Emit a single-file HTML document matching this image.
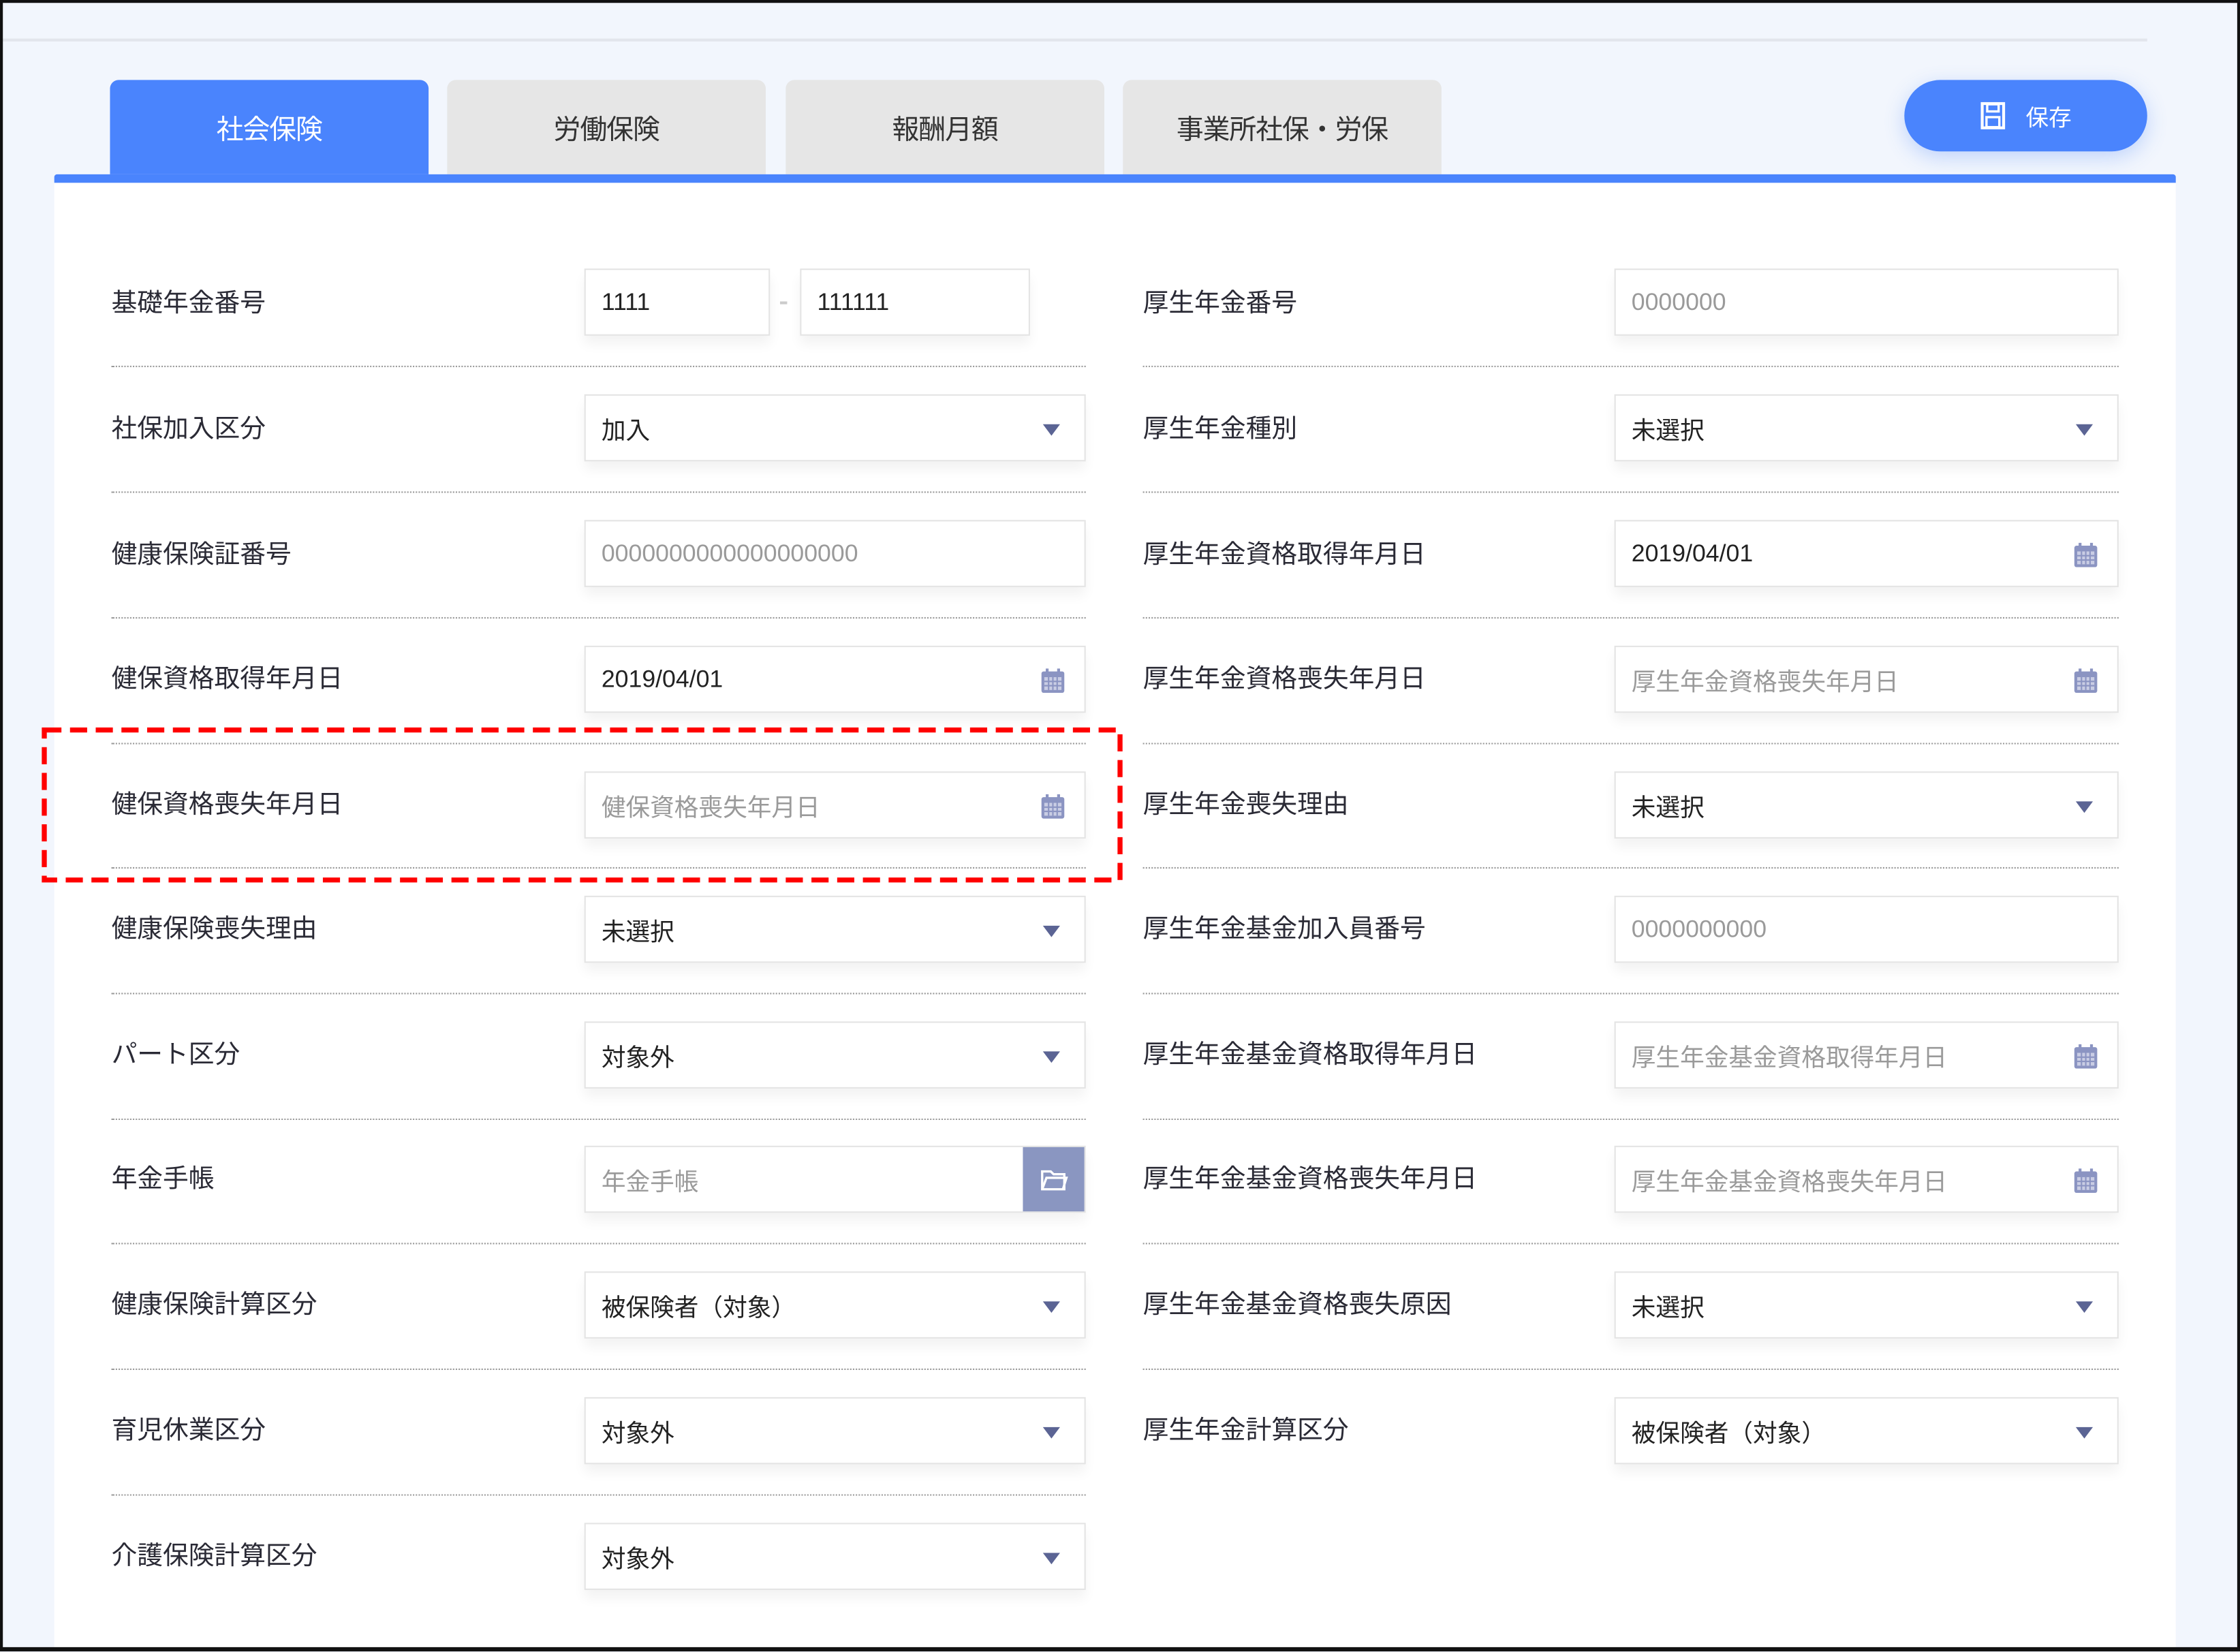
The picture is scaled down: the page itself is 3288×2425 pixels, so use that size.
<!DOCTYPE html>
<html><head><meta charset="utf-8">
<style>
html,body{margin:0;padding:0;}
body{width:3288px;height:2425px;overflow:hidden;background:#f2f6fd;font-family:"Liberation Sans","Noto Sans CJK JP",sans-serif;}
#w{position:absolute;left:0;top:0;width:1568px;height:1156px;transform:scale(2.097);transform-origin:0 0;background:#f2f6fd;}
.a{position:absolute;}
.tab{position:absolute;top:56px;height:66px;width:223px;background:#e6e6e6;border-radius:6px 6px 0 0;color:#333;font-size:19px;display:flex;align-items:center;justify-content:center;letter-spacing:-0.5px;}
.tab.on{background:#4a84fd;color:#fff;}
.lbl{position:absolute;font-size:18px;color:#2a2a35;line-height:20px;}
.in{position:absolute;height:47px;background:#fff;border:1px solid #e4e4e4;box-sizing:border-box;box-shadow:0 6px 8px rgba(0,0,0,0.05);font-size:17px;color:#222;padding-left:11px;display:flex;align-items:center;}
.ph{color:#9a9a9a;}
.dot{position:absolute;height:0;border-top:1.5px dotted #999;}
.tri{position:absolute;right:17px;top:20px;width:0;height:0;border-left:6px solid transparent;border-right:6px solid transparent;border-top:8px solid #5b6494;}
.cal{position:absolute;right:13px;top:14px;}
</style></head><body>
<div id="w">
<div class="a" style="left:0;top:27px;width:1503px;height:2px;background:#e2e5ec"></div>
<div class="tab on" style="left:77px">社会保険</div>
<div class="tab" style="left:313px">労働保険</div>
<div class="tab" style="left:550px">報酬月額</div>
<div class="tab" style="left:786px">事業所社保・労保</div>
<div class="a" style="left:1333px;top:56px;width:170px;height:50px;border-radius:25px;background:#4a84fd;box-shadow:0 4px 14px rgba(74,132,253,0.3);color:#fff;font-size:16px;display:flex;align-items:center;justify-content:center;">
<svg width="18" height="20" viewBox="0 0 18 20" style="margin-right:14px"><rect x="1.5" y="1.5" width="15" height="17" fill="none" stroke="#fff" stroke-width="2"/><rect x="5" y="2" width="8" height="5" fill="none" stroke="#fff" stroke-width="1.6"/><rect x="4.5" y="11" width="9" height="7" fill="none" stroke="#fff" stroke-width="1.6"/></svg>保存</div>
<div class="a" style="left:38px;top:122px;width:1485px;height:6px;background:#4a84fd;border-radius:2px 2px 0 0"></div>
<div class="a" style="left:38px;top:128px;width:1485px;height:1025px;background:#fff"></div>

<div class="lbl" style="left:78px;top:202px">基礎年金番号</div>
<div class="in" style="left:409px;top:188px;width:130px">1111</div>
<div class="a" style="left:546px;top:211px;width:5px;height:2px;background:#ccc"></div>
<div class="in" style="left:560px;top:188px;width:161px">111111</div>
<div class="dot" style="left:78px;top:256px;width:682px"></div>

<div class="lbl" style="left:78px;top:290px">社保加入区分</div>
<div class="in" style="left:409px;top:276px;width:351px">加入<div class="tri"></div></div>
<div class="dot" style="left:78px;top:344px;width:682px"></div>

<div class="lbl" style="left:78px;top:378px">健康保険証番号</div>
<div class="in ph" style="left:409px;top:364px;width:351px">0000000000000000000</div>
<div class="dot" style="left:78px;top:432px;width:682px"></div>

<div class="lbl" style="left:78px;top:465px">健保資格取得年月日</div>
<div class="in" style="left:409px;top:452px;width:351px">2019/04/01<svg class="cal" width="18" height="19" viewBox="0 0 18 19"><rect x="1" y="3" width="16" height="15" rx="1.5" fill="#8b94c2"/><rect x="3" y="7" width="12" height="9" fill="#c9cde4"/><path d="M6 7v9M9 7v9M12 7v9M3 10h12M3 13h12" stroke="#8b94c2" stroke-width="1"/><rect x="4" y="1" width="2" height="4" fill="#8b94c2"/><rect x="12" y="1" width="2" height="4" fill="#8b94c2"/></svg></div>
<div class="dot" style="left:78px;top:520px;width:682px"></div>

<div class="lbl" style="left:78px;top:553px">健保資格喪失年月日</div>
<div class="in ph" style="left:409px;top:540px;width:351px">健保資格喪失年月日<svg class="cal" width="18" height="19" viewBox="0 0 18 19"><rect x="1" y="3" width="16" height="15" rx="1.5" fill="#8b94c2"/><rect x="3" y="7" width="12" height="9" fill="#c9cde4"/><path d="M6 7v9M9 7v9M12 7v9M3 10h12M3 13h12" stroke="#8b94c2" stroke-width="1"/><rect x="4" y="1" width="2" height="4" fill="#8b94c2"/><rect x="12" y="1" width="2" height="4" fill="#8b94c2"/></svg></div>
<div class="dot" style="left:78px;top:607px;width:682px"></div>

<div class="lbl" style="left:78px;top:640px">健康保険喪失理由</div>
<div class="in" style="left:409px;top:627px;width:351px">未選択<div class="tri"></div></div>
<div class="dot" style="left:78px;top:695px;width:682px"></div>

<div class="lbl" style="left:78px;top:728px">パート区分</div>
<div class="in" style="left:409px;top:715px;width:351px">対象外<div class="tri"></div></div>
<div class="dot" style="left:78px;top:783px;width:682px"></div>

<div class="lbl" style="left:78px;top:815px">年金手帳</div>
<div class="in ph" style="left:409px;top:802px;width:351px">年金手帳<div class="a" style="right:0;top:0;width:43px;height:45px;background:#8a96c1;display:flex;align-items:center;justify-content:center"><svg width="20" height="16" viewBox="0 0 20 16"><path d="M1.5 2h6l2 2h7.5v10.5h-15.5z" fill="none" stroke="#fff" stroke-width="1.6"/><path d="M1.5 14.5l3-8h14l-2.5 8" fill="none" stroke="#fff" stroke-width="1.6"/></svg></div></div>
<div class="dot" style="left:78px;top:870px;width:682px"></div>

<div class="lbl" style="left:78px;top:903px">健康保険計算区分</div>
<div class="in" style="left:409px;top:890px;width:351px">被保険者（対象）<div class="tri"></div></div>
<div class="dot" style="left:78px;top:958px;width:682px"></div>

<div class="lbl" style="left:78px;top:991px">育児休業区分</div>
<div class="in" style="left:409px;top:978px;width:351px">対象外<div class="tri"></div></div>
<div class="dot" style="left:78px;top:1046px;width:682px"></div>

<div class="lbl" style="left:78px;top:1079px">介護保険計算区分</div>
<div class="in" style="left:409px;top:1066px;width:351px">対象外<div class="tri"></div></div>

<div class="lbl" style="left:800px;top:202px">厚生年金番号</div>
<div class="in ph" style="left:1130px;top:188px;width:353px">0000000</div>
<div class="dot" style="left:800px;top:256px;width:683px"></div>

<div class="lbl" style="left:800px;top:290px">厚生年金種別</div>
<div class="in" style="left:1130px;top:276px;width:353px">未選択<div class="tri"></div></div>
<div class="dot" style="left:800px;top:344px;width:683px"></div>

<div class="lbl" style="left:800px;top:378px">厚生年金資格取得年月日</div>
<div class="in" style="left:1130px;top:364px;width:353px">2019/04/01<svg class="cal" width="18" height="19" viewBox="0 0 18 19"><rect x="1" y="3" width="16" height="15" rx="1.5" fill="#8b94c2"/><rect x="3" y="7" width="12" height="9" fill="#c9cde4"/><path d="M6 7v9M9 7v9M12 7v9M3 10h12M3 13h12" stroke="#8b94c2" stroke-width="1"/><rect x="4" y="1" width="2" height="4" fill="#8b94c2"/><rect x="12" y="1" width="2" height="4" fill="#8b94c2"/></svg></div>
<div class="dot" style="left:800px;top:432px;width:683px"></div>

<div class="lbl" style="left:800px;top:465px">厚生年金資格喪失年月日</div>
<div class="in ph" style="left:1130px;top:452px;width:353px">厚生年金資格喪失年月日<svg class="cal" width="18" height="19" viewBox="0 0 18 19"><rect x="1" y="3" width="16" height="15" rx="1.5" fill="#8b94c2"/><rect x="3" y="7" width="12" height="9" fill="#c9cde4"/><path d="M6 7v9M9 7v9M12 7v9M3 10h12M3 13h12" stroke="#8b94c2" stroke-width="1"/><rect x="4" y="1" width="2" height="4" fill="#8b94c2"/><rect x="12" y="1" width="2" height="4" fill="#8b94c2"/></svg></div>
<div class="dot" style="left:800px;top:520px;width:683px"></div>

<div class="lbl" style="left:800px;top:553px">厚生年金喪失理由</div>
<div class="in" style="left:1130px;top:540px;width:353px">未選択<div class="tri"></div></div>
<div class="dot" style="left:800px;top:607px;width:683px"></div>

<div class="lbl" style="left:800px;top:640px">厚生年金基金加入員番号</div>
<div class="in ph" style="left:1130px;top:627px;width:353px">0000000000</div>
<div class="dot" style="left:800px;top:695px;width:683px"></div>

<div class="lbl" style="left:800px;top:728px">厚生年金基金資格取得年月日</div>
<div class="in ph" style="left:1130px;top:715px;width:353px">厚生年金基金資格取得年月日<svg class="cal" width="18" height="19" viewBox="0 0 18 19"><rect x="1" y="3" width="16" height="15" rx="1.5" fill="#8b94c2"/><rect x="3" y="7" width="12" height="9" fill="#c9cde4"/><path d="M6 7v9M9 7v9M12 7v9M3 10h12M3 13h12" stroke="#8b94c2" stroke-width="1"/><rect x="4" y="1" width="2" height="4" fill="#8b94c2"/><rect x="12" y="1" width="2" height="4" fill="#8b94c2"/></svg></div>
<div class="dot" style="left:800px;top:783px;width:683px"></div>

<div class="lbl" style="left:800px;top:815px">厚生年金基金資格喪失年月日</div>
<div class="in ph" style="left:1130px;top:802px;width:353px">厚生年金基金資格喪失年月日<svg class="cal" width="18" height="19" viewBox="0 0 18 19"><rect x="1" y="3" width="16" height="15" rx="1.5" fill="#8b94c2"/><rect x="3" y="7" width="12" height="9" fill="#c9cde4"/><path d="M6 7v9M9 7v9M12 7v9M3 10h12M3 13h12" stroke="#8b94c2" stroke-width="1"/><rect x="4" y="1" width="2" height="4" fill="#8b94c2"/><rect x="12" y="1" width="2" height="4" fill="#8b94c2"/></svg></div>
<div class="dot" style="left:800px;top:870px;width:683px"></div>

<div class="lbl" style="left:800px;top:903px">厚生年金基金資格喪失原因</div>
<div class="in" style="left:1130px;top:890px;width:353px">未選択<div class="tri"></div></div>
<div class="dot" style="left:800px;top:958px;width:683px"></div>

<div class="lbl" style="left:800px;top:991px">厚生年金計算区分</div>
<div class="in" style="left:1130px;top:978px;width:353px">被保険者（対象）<div class="tri"></div></div>

<svg class="a" style="left:28px;top:508px" width="760" height="112"><rect x="3" y="3" width="753" height="105" fill="none" stroke="#ff0000" stroke-width="3.5" stroke-dasharray="12 6"/></svg>
<div class="a" style="left:0;top:0;width:1568px;height:1156px;box-sizing:border-box;border:2px solid #111;border-bottom:3px solid #111;"></div>
</div>
</body></html>
